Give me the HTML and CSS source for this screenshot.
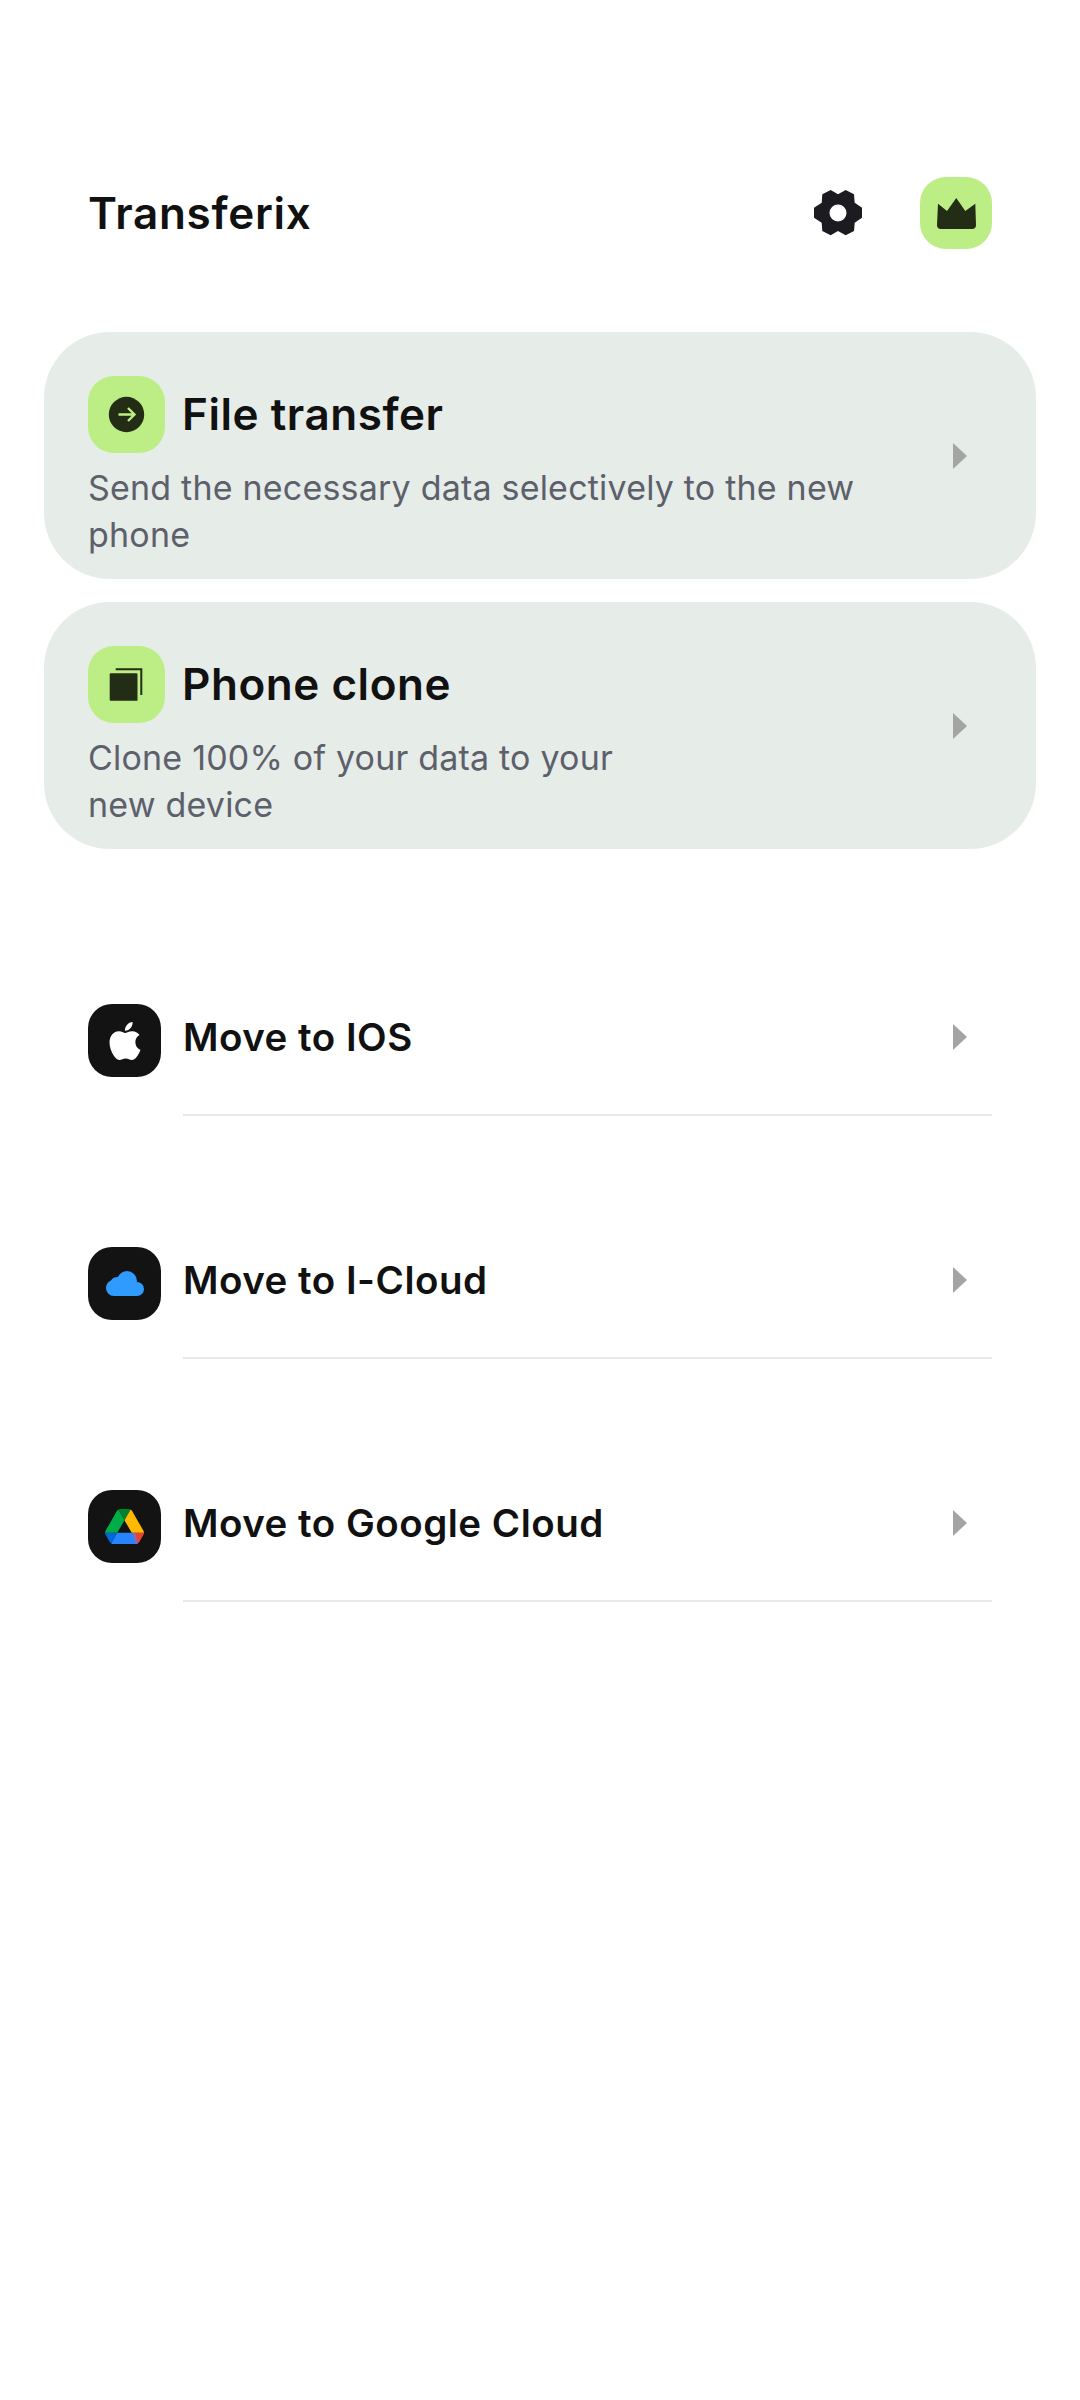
FILE: index.html
```html
<!DOCTYPE html>
<html lang="en">
<head>
<meta charset="utf-8">
<title>Transferix</title>
<link rel="stylesheet" href="styles.css">
</head>
<body>
<main class="page">
  <header class="topbar">
    <h1 class="brand">Transferix</h1>
    <div class="top-actions">
      <svg class="gear" viewBox="0 0 48 46" aria-hidden="true"><path fill-rule="evenodd" d="M8.3 4.3 16.7 0 24 4.3 31.7 0 40 4.3 40.7 12.7 48 17.7V27.7L40.7 32.7 40 41 31.7 45.3 24 41 16.7 45.3 8.3 41 7.7 32.7 0 27.7V17.7L7.7 12.7ZM24 14.5a8.5 8.5 0 1 0 0 17 8.5 8.5 0 0 0 0-17Z"/></svg>
      <div class="badge badge-crown">
        <svg class="crown" viewBox="0 0 39 31" aria-hidden="true"><path d="M1 5.7 10 13 19.3 0 28.3 13 38.3 5.700 39 27a4 4 0 0 1-4 4H4a4 4 0 0 1-4-4Z"/></svg>
      </div>
    </div>
  </header>

  <section class="cards">
    <article class="card">
      <div class="card-body">
        <div class="card-head">
          <div class="badge">
            <svg class="tile-icon" viewBox="0 0 77 77" aria-hidden="true"><circle cx="38.500" cy="38.500" r="17.700" fill="#232c14"/><path d="M30.500 38.500h16M40 32l6.500 6.500L40 45" fill="none" stroke="#bdee85" stroke-width="2.400"/></svg>
          </div>
          <h2 class="card-title">File transfer</h2>
        </div>
        <p class="card-text">Send the necessary data selectively to the new<br>phone</p>
      </div>
      <svg class="chev" viewBox="0 0 14 26" aria-hidden="true"><path d="M0 0 14 13 0 26Z"/></svg>
    </article>
    <article class="card">
      <div class="card-body">
        <div class="card-head">
          <div class="badge">
            <svg class="tile-icon" viewBox="0 0 77 77" aria-hidden="true"><path fill="#232c14" d="M22.500 27.300h26a1 1 0 0 1 1 1v26.400h-26.800a1 1 0 0 1-1-1V28a1 1 0 0 1 .8-.7ZM27.700 22.300H54.300V49H52.300V24.300H27.700Z"/></svg>
          </div>
          <h2 class="card-title">Phone clone</h2>
        </div>
        <p class="card-text">Clone 100% of your data to your<br>new device</p>
      </div>
      <svg class="chev" viewBox="0 0 14 26" aria-hidden="true"><path d="M0 0 14 13 0 26Z"/></svg>
    </article>
  </section>

  <section class="list">
    <div class="row">
      <div class="row-icon">
        <svg class="apple" viewBox="0 0 24 24" aria-hidden="true"><path fill="#fff" d="M12.152 6.896c-.948 0-2.415-1.078-3.96-1.04-2.04.027-3.91 1.183-4.961 3.014-2.117 3.675-.546 9.103 1.519 12.090 1.013 1.454 2.208 3.09 3.792 3.039 1.52-.065 2.09-.987 3.935-.987 1.831 0 2.35.987 3.96.948 1.637-.026 2.676-1.48 3.676-2.948 1.156-1.688 1.636-3.325 1.662-3.415-.039-.013-3.182-1.221-3.22-4.857-.026-3.04 2.48-4.494 2.597-4.559-1.429-2.09-3.623-2.324-4.39-2.376-2-.156-3.675 1.09-4.61 1.09zM15.530 3.830c.843-1.012 1.4-2.427 1.245-3.830-1.207.052-2.662.805-3.532 1.818-.78.896-1.454 2.338-1.273 3.714 1.338.104 2.715-.688 3.559-1.701"/></svg>
      </div>
      <div class="row-body">
        <span class="row-title">Move to IOS</span>
        <svg class="chev" viewBox="0 0 14 26" aria-hidden="true"><path d="M0 0 14 13 0 26Z"/></svg>
      </div>
    </div>
    <div class="row">
      <div class="row-icon">
        <svg class="cloud" viewBox="0 0 39 25" aria-hidden="true"><g fill="#2f9bff"><circle cx="9" cy="17" r="8"/><circle cx="12" cy="13" r="7"/><circle cx="22" cy="10" r="10"/><circle cx="32" cy="18" r="7"/><rect x="9" y="14" width="23" height="11"/></g></svg>
      </div>
      <div class="row-body">
        <span class="row-title">Move to I-Cloud</span>
        <svg class="chev" viewBox="0 0 14 26" aria-hidden="true"><path d="M0 0 14 13 0 26Z"/></svg>
      </div>
    </div>
    <div class="row">
      <div class="row-icon">
        <svg class="drive" viewBox="0 0 87.300 78" aria-hidden="true">
          <path fill="#0066da" d="m6.600 66.850 3.850 6.650c.8 1.400 1.950 2.500 3.300 3.300l13.750-23.800h-27.500c0 1.550.4 3.100 1.200 4.500z"/>
          <path fill="#00ac47" d="m43.650 25-13.750-23.800c-1.350.8-2.500 1.900-3.300 3.300l-25.400 44a9.060 9.060 0 0 0 -1.200 4.500h27.500z"/>
          <path fill="#ea4335" d="m73.550 76.800c1.350-.8 2.500-1.900 3.300-3.300l1.600-2.750 7.650-13.250c.8-1.400 1.200-2.950 1.200-4.500h-27.502l5.852 11.500z"/>
          <path fill="#00832d" d="m43.650 25 13.750-23.800c-1.350-.8-2.900-1.200-4.500-1.200h-18.500c-1.600 0-3.150.45-4.500 1.200z"/>
          <path fill="#2684fc" d="m59.800 53h-32.300l-13.750 23.800c1.350.8 2.900 1.200 4.500 1.200h50.800c1.600 0 3.150-.45 4.500-1.200z"/>
          <path fill="#ffba00" d="m73.400 26.500-12.700-22c-.8-1.400-1.950-2.500-3.300-3.300l-13.750 23.800 16.150 28h27.450c0-1.550-.4-3.100-1.200-4.500z"/>
          <path fill="#8a6ab0" d="M60 53h8l5.500 23.800-5 1.200Z"/>
        </svg>
      </div>
      <div class="row-body">
        <span class="row-title">Move to Google Cloud</span>
        <svg class="chev" viewBox="0 0 14 26" aria-hidden="true"><path d="M0 0 14 13 0 26Z"/></svg>
      </div>
    </div>
  </section>
</main>
</body>
</html>
```

FILE: styles.css
```css
* { box-sizing: border-box; }
html, body { margin: 0; padding: 0; background: #fff; }
body { font-family: Inter, "Noto Sans", "Liberation Sans", sans-serif; color: #111; }
.page { width: 1080px; height: 2400px; overflow: hidden; }

.topbar {
  display: flex;
  align-items: center;
  justify-content: space-between;
  padding: 177px 88px 0;
}
.brand { margin: 0; font-size: 44px; line-height: 72px; font-weight: 600; letter-spacing: .7px; color: #111; }
.top-actions { display: flex; align-items: center; gap: 58px; }
.gear { width: 48px; height: 46px; fill: #1b1b20; display: block; }
.badge {
  width: 77px;
  height: 77px;
  flex: none;
  border-radius: 26px;
  background: #bdee85;
  display: flex;
  align-items: center;
  justify-content: center;
}
.badge-crown { width: 72px; height: 72px; }
.crown { width: 39px; height: 31px; fill: #232c14; display: block; }
.tile-icon { width: 77px; height: 77px; display: block; }

.cards {
  display: flex;
  flex-direction: column;
  gap: 23px;
  margin: 83px 44px 0;
}
.card {
  display: flex;
  align-items: center;
  justify-content: space-between;
  height: 247px;
  padding: 44px 69px 0 44px;
  border-radius: 66px;
  background: #e6ece8;
}
.card .chev { margin-top: -44px; }
.card-body { min-width: 0; align-self: flex-start; }
.card-head { display: flex; align-items: center; gap: 17px; }
.card-title { margin: 0 0 1px; font-size: 44px; line-height: 60px; font-weight: 600; letter-spacing: .55px; color: #111; }
.card-text { margin: 11px 0 0; font-size: 34px; line-height: 47px; font-weight: 400; letter-spacing: .2px; color: #5d606b; }
.chev { width: 14px; height: 26px; fill: #a3a5a4; flex: none; display: block; }

.list {
  display: flex;
  flex-direction: column;
  gap: 131px;
  margin: 155px 88px 0;
}
.row { display: flex; align-items: flex-start; gap: 22px; }
.row-icon {
  width: 73px;
  height: 73px;
  flex: none;
  border-radius: 24px;
  background: #131313;
  display: flex;
  align-items: center;
  justify-content: center;
}
.apple { width: 38px; height: 38px; display: block; }
.cloud { width: 39px; height: 25px; display: block; }
.drive { width: 39px; height: 35px; display: block; }
.row-body {
  flex: 1;
  height: 112px;
  padding: 0 25px 45px 0;
  border-bottom: 2px solid #e8eaea;
  display: flex;
  align-items: center;
  justify-content: space-between;
}
.row-title { font-size: 38.5px; line-height: 50px; font-weight: 600; letter-spacing: .5px; color: #111; }
```
